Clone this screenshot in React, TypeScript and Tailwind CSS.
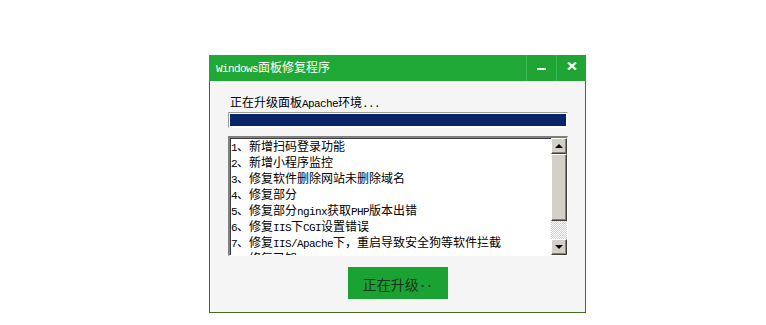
import React from "react";

const changes = [
	"1、新增扫码登录功能",
	"2、新增小程序监控",
	"3、修复软件删除网站未删除域名",
	"4、修复部分",
	"5、修复部分nginx获取PHP版本出错",
	"6、修复IIS下CGI设置错误",
	"7、修复IIS/Apache下，重启导致安全狗等软件拦截",
	"8、修复已知bug",
];

// latin runs in a narrow mono face, like the half-width glyphs of a bitmap CJK font
const MixedText = ({ text }: { text: string }) => (
	<>
		{text.split(/([\x00-\x7f]+)/).map((part, i) =>
			/^[\x00-\x7f]+$/.test(part) ? (
				<span
					key={i}
					className="font-['Liberation_Mono',monospace] text-[11px] leading-[16px] tracking-[-0.6px]"
				>
					{part}
				</span>
			) : (
				<span key={i} className="leading-[16px]">
					{part}
				</span>
			),
		)}
	</>
);

const ScrollButton = ({ up }: { up?: boolean }) => (
	<div className="flex h-[16px] w-[16px] items-center justify-center border-t border-l border-t-white border-l-white border-r border-b border-r-[#404040] border-b-[#404040] bg-[#d4d0c8] shadow-[inset_-1px_-1px_#808080]">
		<div
			className={
				up
					? "h-0 w-0 border-x-[4px] border-b-[4px] border-x-transparent border-b-black"
					: "h-0 w-0 border-x-[4px] border-t-[4px] border-x-transparent border-t-black"
			}
		/>
	</div>
);

export default function App() {
	return (
		<div className="min-h-[325px] w-[766px] bg-white pt-[55px] pl-[209px] font-['Noto_Sans_CJK_SC',sans-serif]">
			<div className="flex h-[258px] w-[377px] flex-col">
				<div className="flex h-[26px] items-stretch bg-[#1fa835]">
					<div className="flex-1 pt-[4px] pl-[7px]">
						<div className="h-[16px] whitespace-nowrap text-[12px] leading-[16px] text-white">
							<MixedText text="Windows面板修复程序" />
						</div>
					</div>
					<div className="flex w-[30px] items-center justify-center border-l border-l-[#3cba52] bg-[#1ea534] pt-[1px]">
						<div className="h-[2px] w-[9px] bg-white" />
					</div>
					<div className="flex w-[30px] items-center justify-center border-l border-l-[#3cba52] bg-[#1ea534] pb-[4px]">
						<svg width="10" height="8" viewBox="0 0 10 8">
							<path d="M1 0.5 L9 7.5 M9 0.5 L1 7.5" stroke="#fff" strokeWidth="2.2" fill="none" />
						</svg>
					</div>
				</div>

				<div className="flex flex-1 flex-col border-x border-b border-[#4a6a24] bg-[#f5f5f5] px-[18px]">
					<div className="mt-[13px] h-[16px] whitespace-nowrap pl-[2px] text-[12px] leading-[16px] text-black">
						<MixedText text="正在升级面板Apache环境..." />
					</div>

					<div className="mt-[2px] w-[340px] border-t border-l border-t-[#9a9a9a] border-l-[#9a9a9a] border-r border-b border-r-white border-b-white bg-white p-[1px]">
						<div className="h-[12px] bg-[#0a246a]" />
					</div>

					<div className="mt-[8px] flex h-[120px] w-[340px] border-t-2 border-l-2 border-t-[#808080] border-l-[#808080] border-r border-b border-r-white border-b-white bg-white shadow-[inset_1px_1px_#404040]">
						<div className="flex-1 overflow-hidden pl-[1px] text-[12px] leading-[16px] text-black">
							{changes.map((line) => (
								<div key={line} className="h-[16px] whitespace-nowrap">
									<MixedText text={line} />
								</div>
							))}
						</div>
						<div className="flex w-[16px] flex-col">
							<ScrollButton up />
							<div className="h-[67px] border-t border-l border-t-white border-l-white border-r border-b border-r-[#404040] border-b-[#404040] bg-[#d4d0c8] shadow-[inset_-1px_-1px_#808080]" />
							<div className="flex-1 bg-[repeating-conic-gradient(#d4d0c8_0_25%,#ffffff_0_50%)] bg-[length:2px_2px]" />
							<ScrollButton />
						</div>
					</div>

					<div className="mx-auto mt-[11px] flex h-[32px] w-[100px] items-end justify-center bg-[#1aa333] pb-[6px] text-[14px] leading-[18px] text-[#1a3320]">
						<span>正在升级</span>
						<span className="font-['Liberation_Mono',monospace] text-[13px] leading-[18px] tracking-[-1px]">..</span>
					</div>
				</div>
			</div>
		</div>
	);
}
